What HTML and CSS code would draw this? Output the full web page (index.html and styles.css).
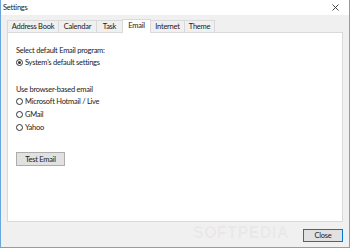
FILE: index.html
```html
<!DOCTYPE html>
<html lang="en">
<head>
  <meta charset="UTF-8" />
  <title>Settings</title>
  <link rel="stylesheet" href="styles.css">
</head>
<body>
  <div class="window">
    <!-- TITLE BAR -->
    <div class="titlebar">
      <span class="title">Settings</span>
      <svg class="close-x" width="7" height="7" viewBox="0 0 7 7"><path d="M0.5 0.5 L6.5 6.5 M6.5 0.5 L0.5 6.5" stroke="#333" stroke-width="0.9" fill="none"/></svg>
    </div>

    <div class="body">
      <!-- TABS -->
      <ul class="tabs">
        <li class="tab t-address">Address Book</li>
        <li class="tab t-calendar">Calendar</li>
        <li class="tab t-task">Task</li>
        <li class="tab t-email active">Email</li>
        <li class="tab t-internet">Internet</li>
        <li class="tab t-theme">Theme</li>
      </ul>

      <div class="panel">
        <p class="label">Select default Email program:</p>
        <label class="radio"><span class="dot checked"></span>System's default settings</label>

        <p class="label second">Use browser-based email</p>
        <label class="radio"><span class="dot"></span>Microsoft Hotmail / Live</label>
        <label class="radio"><span class="dot"></span>GMail</label>
        <label class="radio"><span class="dot"></span>Yahoo</label>

        <button class="btn test">Test Email</button>
      </div>

      <div class="footer">
        <button class="btn close">Close</button>
      </div>
    </div>

    <div class="watermark">SOFTPEDIA</div>
  </div>
</body>
</html>
```

FILE: styles.css
```css
* {
  box-sizing: border-box;
}
body, p, ul {
  margin: 0;
  padding: 0;
}
body {
  font-family: 'Lato', sans-serif;
  font-size: 7.5px;
  letter-spacing: -0.25px;
  color: #1a1a1a;
  background: #fff;
}

.window {
  width: 350px;
  height: 248px;
  border: 1px solid #6aa6dc;
  border-top: none;
  display: flex;
  flex-direction: column;
  position: relative;
  overflow: hidden;
}

/* TITLE BAR */
.titlebar {
  height: 15px;
  background: #fff;
  display: flex;
  align-items: center;
  justify-content: space-between;
  padding: 0 10px 0 2px;
}

/* BODY */
.body {
  flex: 1;
  background: #f0f0f0;
  display: flex;
  flex-direction: column;
  padding: 0 6px 0 6px;
}

.tabs {
  list-style: none;
  display: flex;
  align-items: flex-end;
  height: 17px;
  padding-left: 0;
}
.tab {
  height: 12px;
  line-height: 11px;
  border: 1px solid #d9d9d9;
  border-bottom: none;
  border-right: none;
  text-align: center;
  background: #f0f0f0;
}
.t-address { width: 51px; }
.t-calendar { width: 38px; }
.t-task { width: 26px; }
.t-email { width: 29px; }
.t-internet { width: 34px; border-left: none; border-right: 1px solid #d9d9d9; }
.t-theme { width: 30px; border-left: none; border-right: 1px solid #d9d9d9; }
.tab.active {
  height: 14px;
  background: #fff;
  margin-bottom: -1px;
  position: relative;
  z-index: 1;
  line-height: 11px;
  border-right: 1px solid #d9d9d9;
}

.panel {
  height: 190px;
  background: #fff;
  border: 1px solid #d9d9d9;
  padding: 12px 8px 11px;
  display: flex;
  flex-direction: column;
  align-items: flex-start;
}
.label {
  height: 11px;
  line-height: 11px;
}
.label.second {
  margin-top: 15px;
}
.radio {
  display: flex;
  align-items: center;
  height: 13px;
  gap: 2px;
}
.dot {
  width: 7px;
  height: 7px;
  border: 1px solid #333;
  border-radius: 50%;
  position: relative;
}
.dot.checked::after {
  content: "";
  position: absolute;
  left: 1px;
  top: 1px;
  width: 3px;
  height: 3px;
  border-radius: 50%;
  background: #333;
}

.btn {
  font-family: inherit;
  font-size: 7.5px;
  letter-spacing: -0.25px;
  color: #1a1a1a;
  background: #e1e1e1;
  border: 1px solid #adadad;
  padding: 0;
  height: 14px;
}
.btn.test {
  width: 49px;
  margin-top: 18px;
}

.footer {
  flex: 1;
  display: flex;
  justify-content: flex-end;
  align-items: center;
  padding-top: 1px;
}
.btn.close {
  width: 40px;
  height: 13px;
  border-color: #0078d7;
}

.watermark {
  position: absolute;
  left: 192px;
  top: 224px;
  font-family: 'Liberation Sans', sans-serif;
  font-weight: bold;
  font-size: 16px;
  letter-spacing: 0.5px;
  color: rgba(0, 0, 0, 0.04);
  pointer-events: none;
}
```
